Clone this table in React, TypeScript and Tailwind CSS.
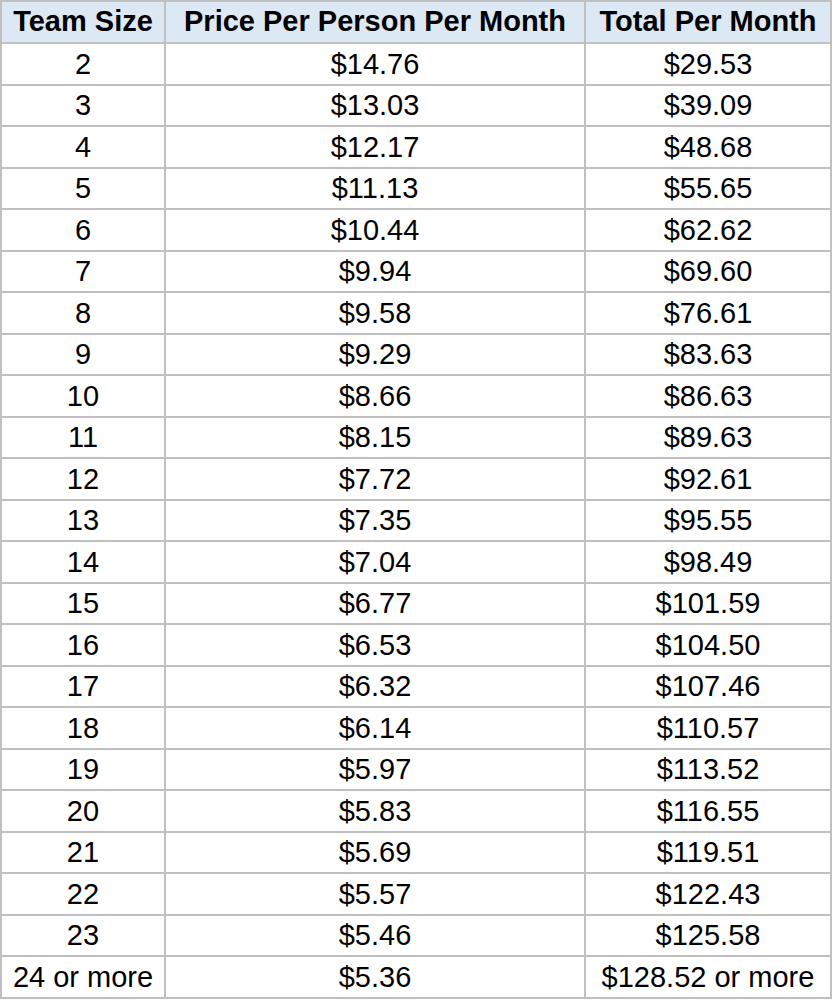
import React from "react";

const rows: [string, string, string][] = [
  ["2", "$14.76", "$29.53"],
  ["3", "$13.03", "$39.09"],
  ["4", "$12.17", "$48.68"],
  ["5", "$11.13", "$55.65"],
  ["6", "$10.44", "$62.62"],
  ["7", "$9.94", "$69.60"],
  ["8", "$9.58", "$76.61"],
  ["9", "$9.29", "$83.63"],
  ["10", "$8.66", "$86.63"],
  ["11", "$8.15", "$89.63"],
  ["12", "$7.72", "$92.61"],
  ["13", "$7.35", "$95.55"],
  ["14", "$7.04", "$98.49"],
  ["15", "$6.77", "$101.59"],
  ["16", "$6.53", "$104.50"],
  ["17", "$6.32", "$107.46"],
  ["18", "$6.14", "$110.57"],
  ["19", "$5.97", "$113.52"],
  ["20", "$5.83", "$116.55"],
  ["21", "$5.69", "$119.51"],
  ["22", "$5.57", "$122.43"],
  ["23", "$5.46", "$125.58"],
  ["24 or more", "$5.36", "$128.52 or more"],
];

const cell =
  "flex items-center justify-center border-r-2 border-b-2 border-[#c0c0c0] whitespace-nowrap";

export default function App() {
  return (
    <div
      className="w-[834px] h-[1000px] overflow-hidden bg-white text-black"
      style={{ fontFamily: '"Liberation Sans", Arial, sans-serif' }}
    >
      <div className="w-[832px] border-l-2 border-t-2 border-[#c0c0c0] grid grid-cols-[164px_420px_246px]">
        <div className={`${cell} h-[42px] bg-[#dde8f5] font-bold text-[29px]`}>Team Size</div>
        <div className={`${cell} h-[42px] bg-[#dde8f5] font-bold text-[29px]`}>
          Price Per Person Per Month
        </div>
        <div className={`${cell} h-[42px] bg-[#dde8f5] font-bold text-[29px]`}>Total Per Month</div>
        {rows.map((r, i) => {
          const h = i % 2 === 0 ? "h-[42px]" : "h-[41px]";
          return (
            <React.Fragment key={i}>
              <div className={`${cell} ${h} text-[29px] pt-[1px]`}>{r[0]}</div>
              <div className={`${cell} ${h} text-[29px] pt-[1px]`}>{r[1]}</div>
              <div className={`${cell} ${h} text-[29px] pt-[1px]`}>{r[2]}</div>
            </React.Fragment>
          );
        })}
      </div>
    </div>
  );
}
